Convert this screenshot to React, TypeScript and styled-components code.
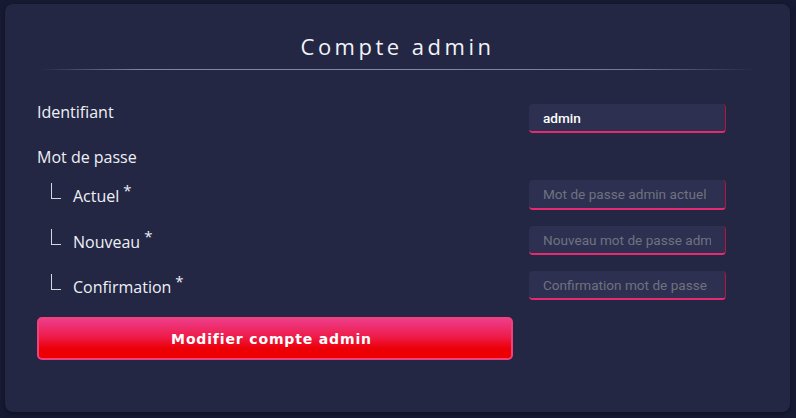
import React from "react";
import styled, { createGlobalStyle } from "styled-components";

const Global = createGlobalStyle`
  html, body { margin: 0; padding: 0; background: #171a33; }
  body { font-family: "Open Sans", "Noto Sans", sans-serif; }
  * { box-sizing: border-box; }
`;

const Page = styled.div`
  width: 796px;
  height: 418px;
  padding: 4px 6px 6px 5px;
  background: #171a33;
`;

const Card = styled.section`
  height: 408px;
  background: #232744;
  border-radius: 8px;
  box-shadow: 0 2px 6px rgba(0, 0, 0, 0.35);
  padding: 27px 64px 0 32px;
  display: flex;
  flex-direction: column;
`;

const Title = styled.h1`
  margin: 0;
  text-align: center;
  font-family: "Open Sans", sans-serif;
  font-weight: 400;
  font-size: 22px;
  line-height: 30px;
  letter-spacing: 3.5px;
  color: #f2f3f8;
  padding-left: 32px;
`;

const Rule = styled.div`
  height: 1px;
  margin: 8px -30px 0 3px;
  background: linear-gradient(
    to right,
    rgba(140, 142, 165, 0) 0%,
    rgba(140, 142, 165, 0.9) 14%,
    rgba(140, 142, 165, 0.95) 50%,
    rgba(140, 142, 165, 0.8) 82%,
    rgba(140, 142, 165, 0) 100%
  );
`;

const Form = styled.form`
  margin-top: 34px;
  display: flex;
  flex-direction: column;
  gap: 16px;
`;

const Row = styled.div<{ $h?: number }>`
  display: grid;
  grid-template-columns: 1fr 197px;
  align-items: center;
  height: ${(p) => p.$h ?? 29}px;
`;

const Heading = styled.div`
  margin: -3px 0 -4px;
  font-size: 16px;
  line-height: 22px;
  color: #eef0f6;
`;

const Label = styled.label<{ $top?: boolean }>`
  display: flex;
  align-items: center;
  font-size: 16px;
  line-height: 22px;
  color: #eef0f6;
  align-self: ${(p) => (p.$top ? "start" : "center")};
  margin-top: ${(p) => (p.$top ? "-3px" : "2px")};
`;

const SubLabel = styled(Label)`
  padding-left: 14px;
`;

const Branch = styled.span`
  width: 10px;
  height: 16px;
  border-left: 1.5px solid #d4d6e4;
  border-bottom: 1.5px solid #d4d6e4;
  margin-right: 12px;
  margin-bottom: 10px;
`;

const Star = styled.span`
  font-size: 15px;
  line-height: 14px;
  margin-left: 4px;
  align-self: flex-start;
  margin-top: 0px;
`;

const Input = styled.input`
  width: 197px;
  height: 100%;
  border: none;
  border-right: 1px solid #b8143f;
  border-bottom: 2px solid #e52a70;
  border-radius: 4px;
  background: #2d3050;
  color: #ffffff;
  font-family: Roboto, "Liberation Sans", Arial, sans-serif;
  font-size: 13.6px;
  font-weight: 500;
  padding: 0 14px;
  outline: none;
  &::placeholder {
    color: #70727f;
    font-weight: 400;
  }
`;

const Button = styled.button`
  width: 476px;
  height: 43px;
  margin-top: 1px;
  padding: 0 7px 0 0;
  border: 2px solid #f0407e;
  border-radius: 5px;
  background: linear-gradient(to bottom, #ee3c8a 0%, #ee1c4a 45%, #ec0008 75%, #ec0000 100%);
  color: #ffffff;
  font-family: "DejaVu Sans", Verdana, sans-serif;
  font-weight: 700;
  font-size: 14px;
  letter-spacing: 0.85px;
  cursor: pointer;
`;

export default function App() {
  return (
    <>
      <Global />
      <Page>
        <Card>
          <Title>Compte admin</Title>
          <Rule />
          <Form onSubmit={(e) => e.preventDefault()}>
            <Row>
              <Label $top>Identifiant</Label>
              <Input defaultValue="admin" />
            </Row>
            <Heading>Mot de passe</Heading>
            <Row $h={30}>
              <SubLabel>
                <Branch />
                Actuel<Star>*</Star>
              </SubLabel>
              <Input type="password" placeholder="Mot de passe admin actuel" />
            </Row>
            <Row>
              <SubLabel>
                <Branch />
                Nouveau<Star>*</Star>
              </SubLabel>
              <Input type="password" placeholder="Nouveau mot de passe admin" />
            </Row>
            <Row>
              <SubLabel>
                <Branch />
                Confirmation<Star>*</Star>
              </SubLabel>
              <Input type="password" placeholder="Confirmation mot de passe admin" />
            </Row>
            <Button type="submit">Modifier compte admin</Button>
          </Form>
        </Card>
      </Page>
    </>
  );
}
